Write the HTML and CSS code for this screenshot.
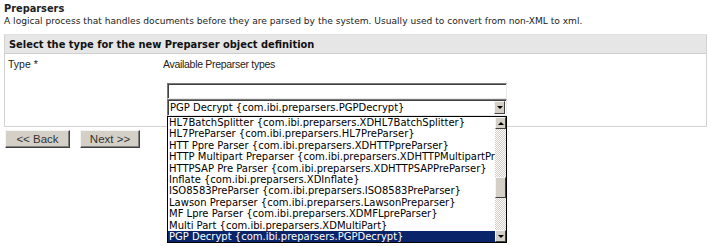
FILE: index.html
```html
<!DOCTYPE html>
<html lang="en">
<head>
    <meta charset="UTF-8">
    <title>Preparsers</title>
    <link rel="stylesheet" href="styles.css">
</head>
<body>
    <h1 class="title">Preparsers</h1>
    <p class="desc">A logical process that handles documents before they are parsed by the system. Usually used to convert from non-XML to xml.</p>

    <div class="panel">
        <div class="panel-head">Select the type for the new Preparser object definition</div>
        <div class="panel-body">
            <div class="field-label">Type *</div>
            <div class="field">
                <div class="field-caption">Available Preparser types</div>
                <input type="text" class="text-box">
                <div class="combo">
                    <div class="combo-value">PGP Decrypt {com.ibi.preparsers.PGPDecrypt}</div>
                    <div class="arrow-btn"><span class="tri-down"></span></div>

                    <!-- open dropdown list -->
                    <div class="combo-list">
                        <ul class="options">
                            <li>HL7BatchSplitter {com.ibi.preparsers.XDHL7BatchSplitter}</li>
                            <li>HL7PreParser {com.ibi.preparsers.HL7PreParser}</li>
                            <li>HTT Ppre Parser {com.ibi.preparsers.XDHTTPpreParser}</li>
                            <li>HTTP Multipart Preparser {com.ibi.preparsers.XDHTTPMultipartPreparser}</li>
                            <li>HTTPSAP Pre Parser {com.ibi.preparsers.XDHTTPSAPPreParser}</li>
                            <li>Inflate {com.ibi.preparsers.XDInflate}</li>
                            <li>ISO8583PreParser {com.ibi.preparsers.ISO8583PreParser}</li>
                            <li>Lawson Preparser {com.ibi.preparsers.LawsonPreparser}</li>
                            <li>MF Lpre Parser {com.ibi.preparsers.XDMFLpreParser}</li>
                            <li>Multi Part {com.ibi.preparsers.XDMultiPart}</li>
                            <li class="selected">PGP Decrypt {com.ibi.preparsers.PGPDecrypt}</li>
                        </ul>
                        <div class="scrollbar">
                            <div class="arrow-btn"><span class="tri-up"></span></div>
                            <div class="track">
                                <div class="thumb"></div>
                            </div>
                            <div class="arrow-btn"><span class="tri-down"></span></div>
                        </div>
                    </div>
                </div>
            </div>
        </div>
    </div>

    <div class="buttons">
        <button class="btn">&lt;&lt; Back</button>
        <button class="btn">Next &gt;&gt;</button>
    </div>
</body>
</html>
```

FILE: styles.css
```css
* {
    margin: 0;
    padding: 0;
    box-sizing: border-box;
}

html,
body {
    min-height: 100vh;
}

body {
    padding: 3px 4px 0 4px;
    background: white;
    font-family: "DejaVu Sans", Verdana, sans-serif;
    color: #000;
}

.title {
    font-size: 9.8px;
    font-weight: bold;
    line-height: 12px;
    color: #222;
}

.desc {
    font-size: 9.1px;
    line-height: 12px;
    color: #222;
}

.panel {
    margin-top: 7px;
    width: 703px;
    border: 1px solid #d2d2d2;
    border-top-color: #e2e2e2;
}

.panel-head {
    height: 19px;
    padding: 2px 0 0 4px;
    background: #e6e6e6;
    border-bottom: 1px solid #cfcfcf;
    font-size: 9.9px;
    font-weight: bold;
    line-height: 15px;
    color: #111;
}

.panel-body {
    display: flex;
    height: 72px;
    padding-top: 4px;
    font-family: "Liberation Sans", Arial, sans-serif;
    font-size: 10.5px;
}

.field-label {
    width: 158px;
    padding-left: 3px;
    color: #222;
}

.field {
    position: relative;
    width: 340px;
}

.field-caption {
    height: 25px;
    letter-spacing: -0.3px;
    color: #222;
}

.text-box {
    display: block;
    width: 340px;
    height: 16px;
    margin-left: 4px;
    border: 1px solid;
    border-color: #7a7a7a #e8e8e8 #e8e8e8 #7a7a7a;
    box-shadow: inset 1px 1px 0 #404040;
    background: white;
}

.combo {
    position: relative;
    display: flex;
    width: 340px;
    height: 17px;
    margin-left: 4px;
    border: 1px solid;
    border-color: #7a7a7a #e8e8e8 #e8e8e8 #7a7a7a;
    box-shadow: inset 1px 1px 0 #404040;
    background: white;
}

.combo-value {
    flex: 1;
    padding: 1px 0 0 2px;
    font-family: "DejaVu Sans", Tahoma, sans-serif;
    font-size: 10px;
    line-height: 13px;
    white-space: nowrap;
}

.arrow-btn {
    display: flex;
    align-items: center;
    justify-content: center;
    width: 11px;
    height: 13px;
    margin: 1px 1px 0 0;
    background: #d4d0c8;
    border: 1px solid;
    border-color: #f4f4f4 #404040 #404040 #f4f4f4;
}

.tri-down,
.tri-up {
    width: 0;
    height: 0;
    border-left: 3px solid transparent;
    border-right: 3px solid transparent;
}

.tri-down {
    border-top: 3px solid #000;
}

.tri-up {
    border-bottom: 3px solid #000;
}

/* dropdown popup, lies over the rest of the page */
.combo-list {
    position: absolute;
    left: -1px;
    top: 16px;
    z-index: 2;
    display: flex;
    width: 340px;
    height: 127px;
    border: 1px solid #000;
    background: white;
}

.options {
    list-style: none;
    flex: 1;
    overflow: hidden;
    font-family: "DejaVu Sans", Tahoma, sans-serif;
    font-size: 10px;
}

.options li {
    height: 11.4px;
    padding-left: 1px;
    line-height: 11.4px;
    white-space: nowrap;
    overflow: hidden;
}

.options li.selected {
    background: #0a246a;
    color: white;
}

.scrollbar {
    display: flex;
    flex-direction: column;
    width: 11px;
}

.scrollbar .arrow-btn {
    margin: 0;
    height: 12px;
}

.track {
    flex: 1;
    position: relative;
    background-color: #ece9e2;
    background-image: repeating-conic-gradient(#d4d0c8 0 25%, #fbfbfb 0 50%);
    background-size: 2px 2px;
}

.thumb {
    position: absolute;
    left: 0;
    right: 0;
    top: 48px;
    height: 21px;
    background: #d4d0c8;
    border: 1px solid;
    border-color: #f4f4f4 #404040 #404040 #f4f4f4;
}

.buttons {
    display: flex;
    gap: 10px;
    margin: 3px 0 0 1px;
}

.btn {
    width: 65px;
    height: 18px;
    background: #d4d0c8;
    border: 1px solid;
    border-color: #f4f4f4 #404040 #404040 #f4f4f4;
    box-shadow: inset -1px -1px 0 #808080;
    font-family: "Liberation Sans", Arial, sans-serif;
    font-size: 11.5px;
    color: #333;
}

.btn + .btn {
    width: 60px;
}
```
